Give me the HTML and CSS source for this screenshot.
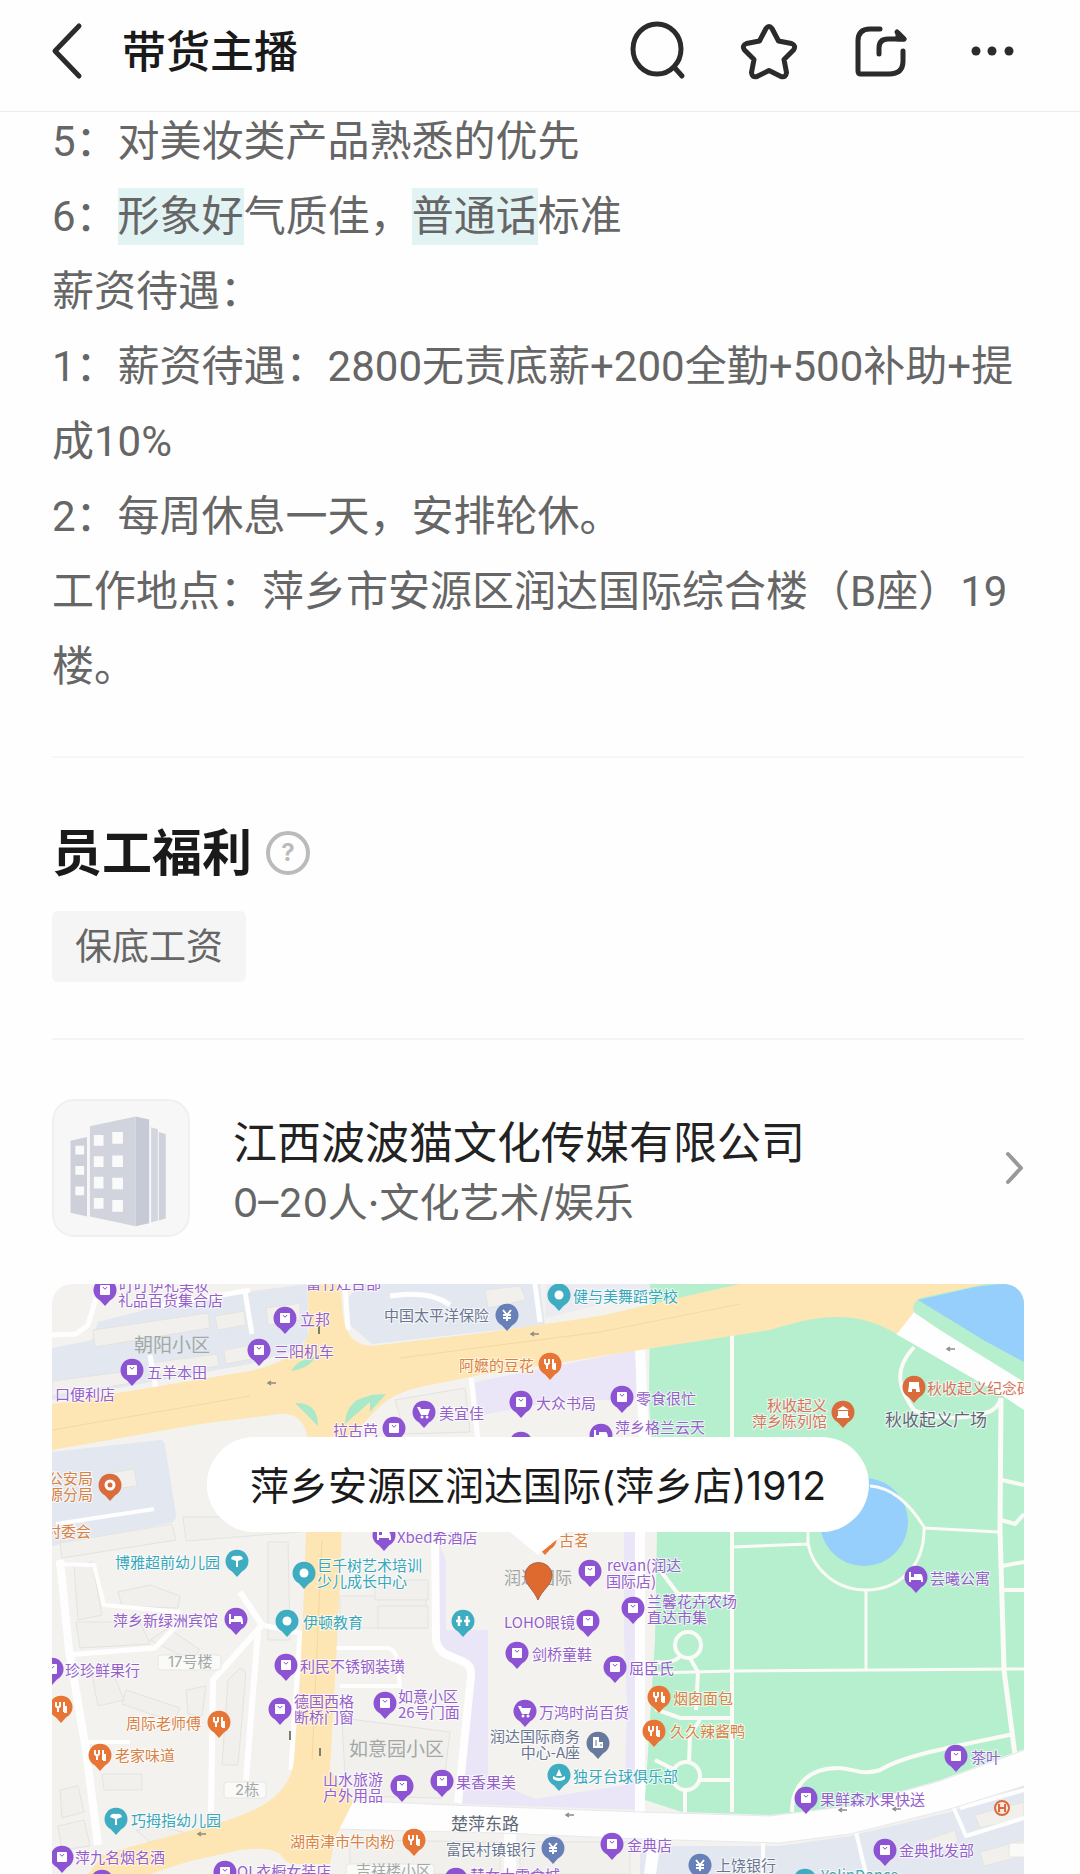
FILE: index.html
```html
<!DOCTYPE html>
<html lang="zh-CN">
<head>
    <meta charset="UTF-8" />
    <meta name="viewport" content="width=device-width, initial-scale=1" />
    <title>带货主播</title>

    <link rel="stylesheet" href="styles.css">
</head>
<body>
<header class="topbar">
    <button class="icon-btn back" type="button" aria-label="返回">
        <svg width="34" height="60" viewBox="0 0 34 60"><path d="M30 5 L6 30 L30 55" /></svg>
    </button>
    <h1>带货主播</h1>
    <div class="actions">
        <button class="icon-btn" type="button" aria-label="搜索">
            <svg width="60" height="60" viewBox="0 0 60 60"><ellipse cx="31" cy="28" rx="24" ry="25" /><path d="M48 46 L56 55" /></svg>
        </button>
        <button class="icon-btn" type="button" aria-label="收藏">
            <svg width="60" height="60" viewBox="0 0 60 60"><path d="M28 7.500 Q31 3.500 34 7.500 L40.500 20 L53.500 22.500 Q58.500 24.500 55.500 29 L46 38.500 L48.500 51.500 Q48 57 43 55.500 L31 49.500 L19 55.500 Q14 57 13.500 51.500 L16 38.500 L6.500 29 Q3.500 24.500 8.500 22.500 L21.500 20 Z" /></svg>
        </button>
        <button class="icon-btn" type="button" aria-label="分享">
            <svg width="60" height="60" viewBox="0 0 60 60"><path d="M30 8 H20 Q8 8 8 20 V50 Q8 53 11 53 H39 Q53 53 53 40 V30" /><path d="M29 33 V27 Q29 18 38 18 H54 L47 11" /><path d="M48 12 L54 18 H48 Z" /></svg>
        </button>
        <button class="icon-btn" type="button" aria-label="更多">
            <svg class="dots" width="60" height="60" viewBox="0 0 60 60"><circle cx="14" cy="30" r="4.500" /><circle cx="30" cy="30" r="4.500" /><circle cx="47" cy="30" r="4.500" /></svg>
        </button>
    </div>
</header>

<main class="page">
    <section class="detail">
        <p>5：对美妆类产品熟悉的优先</p>
        <p>6：<mark>形象好</mark>气质佳，<mark>普通话</mark>标准</p>
        <p>薪资待遇：</p>
        <p>1：薪资待遇：2800无责底薪+200全勤+500补助+提成10%</p>
        <p>2：每周休息一天，安排轮休。</p>
        <p>工作地点：萍乡市安源区润达国际综合楼（B座）19楼。</p>
    </section>

    <section class="welfare">
        <div class="welfare-head">
            <h2>员工福利</h2>
            <button class="help" type="button" aria-label="福利说明">?</button>
        </div>
        <ul class="tags">
            <li>保底工资</li>
        </ul>
    </section>

    <a class="company" href="#">
        <svg class="logo" viewBox="0 0 138 138">
            <path fill="#cdd0d8" d="M17 41 L34 37 V119 L17 115 Z" />
            <path fill="#d1d4dd" d="M37 26 L84 16 V129 L37 119 Z" />
            <path fill="#c5cad6" d="M84 16 L98 19 V126 L84 129 Z" />
            <path fill="#d3d6de" d="M100 27 L107 29 V123 L100 125 Z" />
            <path fill="#cdd1da" d="M108 32 L115 34 V121 L108 123 Z" />
            <path fill="#fafafa" d="M22 46h9v9h-9z M22 67h9v9h-9z M22 88h9v9h-9z M41 35h10v11h-10z M60 32h11v12h-11z M41 57h10v11h-10z M60 56h11v12h-11z M41 78h10v12h-10z M60 79h11v12h-11z M41 100h10v11h-10z M60 102h11v12h-11z" />
        </svg>
        <span class="company-text">
            <strong>江西波波猫文化传媒有限公司</strong>
            <span>0–20人·文化艺术/娱乐</span>
        </span>
        <svg class="chevron" width="20" height="36" viewBox="0 0 20 36"><path d="M4 4 L17 18 L4 32" /></svg>
    </a>

    <div class="map">
        <svg class="map-canvas" viewBox="52 1284 972 590" preserveAspectRatio="xMidYMin slice">
            <defs>
                <path id="pin" d="M0 16 L-5 10.500 A11.500 11.500 0 1 1 5 10.500 Z" />
                <g id="shop"><use href="#pin" fill="#8c54d2" /><rect x="-5" y="-5" width="10" height="10" rx="1" fill="#fff" /><path d="M-2 -3 Q0 1 2 -3" stroke="#8c54d2" fill="none" /></g>
                <g id="cart"><use href="#pin" fill="#8c54d2" /><path d="M-7 -5 H-4 L-3 -3 H6 L4 3 H-3 Z" fill="#fff" /><circle cx="-2" cy="5" r="1.500" fill="#fff" /><circle cx="3" cy="5" r="1.500" fill="#fff" /></g>
                <g id="bed"><use href="#pin" fill="#8c54d2" /><path d="M-7 -5 H-5 V0 H-2 V-3 H5 Q7 -2 7 5 H5 V3 H-5 V5 H-7 Z" fill="#fff" /></g>
                <g id="food"><use href="#pin" fill="#e67536" /><path d="M-5 -5 V-1 L-3 1 V5 M-1 -5 V-1 L-3 1 M3 -5 V5 M5 -1 V5 H3" stroke="#fff" stroke-width="2" fill="none" /></g>
                <g id="spot"><use href="#pin" fill="#3fadc1" /><circle r="4.500" fill="#fff" /></g>
                <g id="kids"><use href="#pin" fill="#3fadc1" /><path d="M-6 -2 Q-5 -6 0 -5 Q5 -6 6 -2 L1 0 V6 H-1 V0 Z" fill="#fff" /></g>
                <g id="people"><use href="#pin" fill="#3fadc1" /><path d="M-4 -5 V5 M4 -5 V5 M-7 0 H-1 M1 0 H7" stroke="#fff" stroke-width="2.500" /></g>
                <g id="club"><use href="#pin" fill="#3fadc1" /><path d="M0 -6 L3 1 H-3 Z M-6 1 Q0 5 6 1 V4 Q0 8 -6 4 Z" fill="#fff" /></g>
                <g id="bank"><use href="#pin" fill="#6780b8" /><path d="M-4 -5 L0 0 L4 -5 M0 0 V6 M-4 0 H4 M-4 3 H4" stroke="#fff" stroke-width="2" fill="none" /></g>
                <g id="office"><use href="#pin" fill="#667a9b" /><path d="M-5 -6 H1 V-1 H5 V5 H-5 Z" fill="#fff" /><path d="M-2 -3 V3 M2 2 H4" stroke="#667a9b" /></g>
                <g id="museum"><use href="#pin" fill="#d96b3c" /><path d="M0 -6 L6 -2 H-6 Z M-5 -1 H5 V4 H-5 Z M-6 4 H6 V6 H-6 Z" fill="#fff" /></g>
                <g id="memorial"><use href="#pin" fill="#d96b3c" /><path d="M-5 -5 H5 V-2 L6 5 H2 V2 H-2 V5 H-6 L-5 -2 Z" fill="#fff" /></g>
                <g id="arrow"><path d="M-4 0 H4 M-1 -2 L-4 0 L-1 2" stroke="#8f8c84" stroke-width="1.500" fill="none" /></g>
            </defs>

            <rect x="52" y="1284" width="972" height="590" fill="#f3f2ef" />

            <!-- housing blocks -->
            <g fill="#e3e8f0">
                <path d="M52 1348 L92 1340 L98 1322 L160 1306 L245 1292 L308 1284 V1336 L298 1350 L250 1364 L52 1400 Z" />
                <path d="M52 1452 L160 1440 Q164 1440 165 1445 L176 1515 Q176 1522 170 1523 L52 1546 Z" />
                <path d="M360 1284 H540 L545 1325 L372 1344 L350 1325 L346 1300 Z" />
                <path d="M640 1846 L780 1846 L850 1836 L950 1812 L1024 1786 V1874 H640 Z" />
                <path d="M546 1284 H660 V1290 L545 1318 Z" fill="#ecebf2" />
            </g>
            <g fill="#f1f0ed" stroke="#e4e3df">
                <path d="M93 1330 L208 1313 L210 1328 L95 1347 Z" />
                <path d="M215 1316 L244 1311 L246 1325 L218 1330 Z" />
                <path d="M266 1308 L300 1303 V1320 L268 1325 Z" />
                <path d="M150 1363 L217 1354 L219 1366 L152 1376 Z" />
                <path d="M224 1350 L262 1343 V1357 L226 1364 Z" />
                <path d="M52 1381 L130 1371 L132 1383 L52 1396 Z" />
                <path d="M104 1474 L134 1469 L137 1486 L106 1490 Z" />
                <path d="M60 1543 L172 1524 L176 1540 L62 1558 Z" />
                <path d="M183 1517 H300 V1532 L186 1541 Z" />
                <path d="M268 1542 H288 L290 1640 H268 Z" />
                <path d="M74 1566 L92 1562 L102 1615 L78 1620 Z" />
                <path d="M118 1592 L150 1585 L180 1596 L178 1608 L122 1606 Z" />
                <path d="M76 1622 H140 L150 1644 L80 1648 Z" />
                <path d="M150 1640 L168 1628 L200 1650 L190 1660 Z" />
                <path d="M126 1690 L180 1708 L174 1722 L122 1704 Z" />
                <path d="M92 1675 L112 1670 L124 1700 L98 1706 Z" />
                <path d="M186 1690 L206 1686 L202 1716 L188 1714 Z" />
                <path d="M228 1680 L240 1668 L246 1672 L238 1765 L222 1765 Z" />
                <path d="M102 1774 H142 V1790 H104 Z" />
                <path d="M60 1790 L78 1786 L84 1812 L62 1818 Z" />
                <path d="M58 1826 L84 1820 L90 1846 L62 1850 Z" />
                <path d="M136 1830 L160 1826 L190 1834 L150 1842 Z" />
                <path d="M340 1596 H426 V1628 H340 Z" />
                <path d="M342 1718 L450 1732 L442 1798 L346 1796 Z" />
                <path d="M375 1580 H428 V1600 H375 Z M378 1606 H428 V1628 H378 Z" />
                <path d="M395 1400 L465 1388 L470 1432 L405 1434 Z" />
                <path d="M485 1290 L520 1286 L526 1300 L488 1308 Z" />
                <path d="M350 1840 L500 1842 V1874 H350 Z" />
                <path d="M520 1842 H630 V1874 H520 Z" />
                <path d="M975 1815 L1024 1802 V1818 L980 1828 Z" />
                <path d="M920 1842 L955 1830 L958 1842 L925 1854 Z" />
                <path d="M980 1852 L1024 1840 V1856 L984 1866 Z" />
            </g>

            <!-- shopping area -->
            <g fill="#ebe6f7">
                <path d="M475 1382 L636 1350 V1400 L560 1400 L478 1416 Z" />
                <path d="M434 1532 L446 1560 V1630 H488 V1778 L535 1799 L625 1785 L627 1700 L624 1640 V1532 H640 V1810 L462 1804 L474 1665 L440 1650 Z" />
            </g>

            <!-- park and water -->
            <path fill="#b6efce" d="M650 1284 H1024 V1749 L940 1780 L850 1806 L770 1815 L682 1812 L645 1800 L655 1640 L657 1532 L649 1400 Z" />
            <path fill="#96cffb" d="M918 1300 L975 1287 L1000 1284 H1024 V1362 L985 1341 Z" />
            <circle cx="864" cy="1522" r="44" fill="#96cffb" />

            <!-- footpaths in the park -->
            <g fill="none" stroke="#fbfaf6" stroke-width="4">
                <path d="M732 1332 V1812" />
                <path d="M655 1673 L732 1671 L1024 1669" stroke-width="3" />
                <path d="M866 1590 V1671" stroke-width="3" />
                <path d="M870 1486 Q900 1488 924 1527 C925 1570 895 1590 866 1590 C835 1590 812 1568 808 1543 V1528 M808 1544 L732 1547 M924 1528 L998 1532" stroke-width="3" />
                <path d="M914 1347 C895 1368 896 1385 914 1410 Q945 1424 985 1413 Q998 1410 1001 1398" />
                <path d="M1001 1398 L1000 1530 L1004 1670 L1015 1755" stroke-width="5" />
                <path d="M1002 1480 L1024 1485 M1001 1520 L1015 1524 L1024 1514 M1002 1566 L1024 1562 M1002 1590 H1024" />
                <path d="M792 1812 C792 1784 810 1768 838 1768 C852 1768 862 1776 880 1770 C900 1758 925 1752 1014 1734" />
                <circle cx="688" cy="1645" r="13" />
                <circle cx="686" cy="1776" r="14" />
                <path d="M655 1662 Q675 1664 680 1656 M690 1658 L698 1672 L696 1710 M700 1720 L690 1735 L689 1762 M685 1790 V1812 M700 1780 H732 M655 1760 L675 1770" />
                <path d="M655 1709 L680 1718 H732 M660 1570 L678 1594 H732" />
            </g>
            <path fill="#fefefe" d="M912 1311 L940 1330 L1024 1382 V1410 L1000 1394 L910 1342 L896 1334 Z" />

            <!-- minor roads -->
            <g fill="none" stroke="#fefefe" stroke-width="8" stroke-linejoin="round">
                <path d="M640 1348 L644 1440 M640 1530 V1812" stroke-width="10" />
                <path d="M471 1378 L478 1440" stroke-width="5" />
                <path d="M435 1530 L436 1640 Q438 1652 450 1656 L464 1662 Q472 1666 471 1676 L458 1803" />
                <path d="M60 1560 L69 1650 L86 1750 L98 1845" />
                <path d="M66 1655 L155 1648 L180 1622" stroke-width="5" />
                <path d="M56 1564 L94 1565 L104 1605 L180 1612" stroke-width="4" />
                <path d="M240 1592 L262 1625 L213 1680 L211 1812" stroke-width="6" />
                <path d="M258 1630 L246 1780" stroke-width="6" />
                <path d="M262 1625 L300 1633 L291 1770" stroke-width="5" />
                <path d="M84 1742 L130 1742" stroke-width="4" />
                <path d="M52 1335 L76 1334 L88 1325 L96 1298 M245 1292 L252 1334 M150 1355 L156 1390 M160 1306 L250 1290 M345 1284 L348 1330" stroke-width="5" />
                <path d="M390 1296 Q430 1290 450 1305 M535 1284 L540 1322" stroke-width="5" />
                <path d="M56 1524 L154 1509" stroke-width="4" />
                <path d="M335 1648 H388 Q398 1650 398 1670 L400 1686 H340" stroke-width="4" />
                <path d="M763 1842 V1874 M856 1832 L866 1874 M952 1804 L966 1836 L1024 1818 M960 1808 L1024 1790" stroke-width="4" />
                <path d="M510 1830 V1874 M655 1838 L650 1874" stroke-width="12" />
            </g>
            <path fill="#fefefe" stroke="#e9e8ec" d="M340 1800 L450 1805 L640 1812 L770 1816 L850 1806 L940 1781 L1030 1748 V1784 L950 1809 L850 1834 L780 1843 L640 1839 L500 1833 L335 1829 Z" />

            <!-- main roads -->
            <path fill="#fde6b3" d="M52 1404 L250 1371 Q306 1358 309 1330 L308 1284 H340 L343 1315 Q346 1345 372 1346 L490 1332 L600 1316 L700 1293 L740 1284 H985 L920 1298 Q911 1304 914 1312 L897 1334 C860 1312 825 1312 770 1330 L640 1350 L480 1375 L420 1387 Q395 1392 378 1408 L343 1445 L341 1560 L335 1680 L330 1770 L353 1802 L335 1838 L330 1864 H292 Q285 1862 280 1854 Q270 1846 240 1850 L190 1861 L150 1874 H88 L104 1854 L200 1828 C250 1815 290 1800 294 1760 L300 1680 L305 1570 L308 1440 Q304 1412 280 1414 L200 1424 L52 1450 Z" />
            <g fill="none" stroke="#f3d9a0">
                <path d="M52 1430 L250 1396 M400 1358 L600 1332 L740 1304 M322 1540 L312 1760" />
            </g>
            <g fill="#a9e9c9">
                <path d="M291 1371 Q298 1359 315 1357 Q310 1368 291 1371 Z" />
                <path d="M295 1403 Q318 1402 318 1426 Z" />
                <path d="M345 1424 Q346 1396 378 1395 Z" />
                <path d="M370 1395 L386 1394 L370 1412 Z" />
            </g>

            <use href="#arrow" x="272" y="1383" /><use href="#arrow" x="535" y="1334" />
            <use href="#arrow" x="570" y="1815" /><use href="#arrow" x="202" y="1834" />
            <use href="#arrow" x="843" y="1810" /><use href="#arrow" x="897" y="1809" /><use href="#arrow" x="951" y="1349" />
            <path d="M320 1748 V1756 M290 1731 V1740 M319 1326 V1334" stroke="#77806f" stroke-width="2" />

            <g fill="#fafaf9" stroke="#e6e6e3">
                <rect x="158" y="1655" width="63" height="15" rx="3" />
                <rect x="224" y="1782" width="42" height="16" rx="3" />
                <rect x="346" y="1864" width="88" height="16" rx="3" />
                <rect x="1009" y="1843" width="30" height="14" rx="3" />
            </g>

            <!-- area names -->
            <g class="area">
                <text x="134" y="1352">朝阳小区</text>
                <text x="349" y="1756">如意园小区</text>
            </g>
            <g class="block">
                <text x="168" y="1667">17号楼</text>
                <text x="235" y="1795">2栋</text>
                <text x="356" y="1876">吉祥楼小区</text>
                <text class="big" x="504" y="1584">润达国际</text>
            </g>
            <g class="road">
                <text x="451" y="1830">楚萍东路</text>
                <text x="885" y="1426">秋收起义广场</text>
            </g>

            <!-- shops and hotels -->
            <g class="label purple">
                <use href="#shop" x="105" y="1290" /><text x="119" y="1291">叮叮伊礼美妆</text><text x="118" y="1306">礼品百货集合店</text>
                <text x="306" y="1289">富竹灶台部</text>
                <use href="#shop" x="285" y="1318" /><text x="300" y="1325">立邦</text>
                <use href="#shop" x="259" y="1350" /><text x="274" y="1357">三阳机车</text>
                <use href="#shop" x="132" y="1370" /><text x="147" y="1378">五羊本田</text>
                <text x="55" y="1400">口便利店</text>
                <use href="#shop" x="394" y="1428" /><text x="333" y="1436">拉古芭</text>
                <use href="#cart" x="424" y="1412" /><text x="439" y="1419">美宜佳</text>
                <use href="#shop" x="521" y="1402" /><text x="536" y="1409">大众书局</text>
                <use href="#shop" x="622" y="1397" /><text x="636" y="1404">零食很忙</text>
                <use href="#bed" x="601" y="1435" /><text x="615" y="1433">萍乡格兰云天</text>
                <use href="#shop" x="521" y="1443" />
                <use href="#bed" x="384" y="1535" /><text x="397" y="1543">Xbed希酒店</text>
                <use href="#shop" x="590" y="1571" /><text x="607" y="1571">revan(润达</text><text x="606" y="1587">国际店)</text>
                <use href="#shop" x="633" y="1608" /><text x="647" y="1607">兰馨花卉农场</text><text x="647" y="1623">直达市集</text>
                <use href="#bed" x="916" y="1577" /><text x="930" y="1584">芸曦公寓</text>
                <use href="#bed" x="236" y="1619" /><text class="end" x="218" y="1626">萍乡新绿洲宾馆</text>
                <use href="#shop" x="286" y="1665" /><text x="300" y="1672">利民不锈钢装璜</text>
                <use href="#shop" x="52" y="1669" /><text x="65" y="1676">珍珍鲜果行</text>
                <use href="#shop" x="280" y="1709" /><text x="294" y="1707">德国西格</text><text x="294" y="1723">断桥门窗</text>
                <use href="#shop" x="588" y="1621" /><text class="end" x="575" y="1628">LOHO眼镜</text>
                <use href="#shop" x="517" y="1653" /><text x="532" y="1660">剑桥童鞋</text>
                <use href="#shop" x="615" y="1667" /><text x="629" y="1674">屈臣氏</text>
                <use href="#shop" x="385" y="1703" /><text x="398" y="1702">如意小区</text><text x="398" y="1718">26号门面</text>
                <use href="#cart" x="525" y="1711" /><text x="539" y="1718">万鸿时尚百货</text>
                <use href="#shop" x="402" y="1786" /><text x="323" y="1785">山水旅游</text><text x="323" y="1801">户外用品</text>
                <use href="#shop" x="442" y="1781" /><text x="456" y="1788">果香果美</text>
                <use href="#shop" x="612" y="1844" /><text x="627" y="1851">金典店</text>
                <use href="#shop" x="62" y="1857" /><text x="75" y="1863">萍九名烟名酒</text>
                <use href="#shop" x="225" y="1872" /><text x="237" y="1877">QL衣橱女装店</text>
                <use href="#shop" x="102" y="1881" />
                <use href="#shop" x="456" y="1879" /><text x="470" y="1881">慧女士零食城</text>
                <use href="#shop" x="956" y="1756" /><text x="971" y="1763">茶叶</text>
                <use href="#shop" x="806" y="1798" /><text x="820" y="1805">果鲜森水果快送</text>
                <use href="#shop" x="885" y="1850" /><text x="899" y="1856">金典批发部</text>
            </g>

            <!-- food -->
            <g class="label orange">
                <use href="#food" x="550" y="1364" /><text class="end" x="534" y="1371">阿嬷的豆花</text>
                <use href="#food" x="545" y="1539" /><text x="559" y="1546">古茗</text>
                <use href="#food" x="659" y="1697" /><text x="673" y="1704">烟囱面包</text>
                <use href="#food" x="654" y="1731" /><text x="670" y="1737">久久辣酱鸭</text>
                <use href="#food" x="61" y="1707" />
                <use href="#food" x="219" y="1722" /><text class="end" x="201" y="1729">周际老师傅</text>
                <use href="#food" x="100" y="1755" /><text x="115" y="1761">老家味道</text>
                <use href="#food" x="414" y="1840" /><text class="end" x="395" y="1847">湖南津市牛肉粉</text>
                <use href="#pin" x="110" y="1485" fill="#d96b3c" /><circle cx="110" cy="1485" r="4" fill="none" stroke="#fff" stroke-width="3" />
                <text class="end" x="93" y="1484">公安局</text><text class="end" x="93" y="1500">源分局</text>
                <text class="end" x="91" y="1537">村委会</text>
            </g>

            <!-- sights -->
            <g class="label red">
                <use href="#museum" x="843" y="1412" /><text class="end" x="827" y="1411">秋收起义</text><text class="end" x="827" y="1427">萍乡陈列馆</text>
                <use href="#memorial" x="914" y="1387" /><text x="927" y="1394">秋收起义纪念碑</text>
                <circle cx="1002" cy="1808" r="7" fill="#fbe9e0" stroke="#d96b3c" stroke-width="2" /><path d="M999 1804 V1812 M1005 1804 V1812 M999 1808 H1005" stroke="#d96b3c" stroke-width="2" />
            </g>

            <!-- schools and leisure -->
            <g class="label teal">
                <use href="#spot" x="559" y="1295" /><text x="573" y="1302">健与美舞蹈学校</text>
                <use href="#kids" x="237" y="1561" /><text class="end" x="220" y="1568">博雅超前幼儿园</text>
                <use href="#spot" x="304" y="1573" /><text x="317" y="1571">巨千树艺术培训</text><text x="317" y="1587">少儿成长中心</text>
                <use href="#spot" x="287" y="1621" /><text x="303" y="1628">伊顿教育</text>
                <use href="#people" x="463" y="1621" />
                <use href="#club" x="559" y="1775" /><text x="573" y="1782">独牙台球俱乐部</text>
                <use href="#kids" x="116" y="1819" /><text x="131" y="1826">巧拇指幼儿园</text>
                <use href="#spot" x="805" y="1880" /><text x="821" y="1881">YolinDance</text>
            </g>

            <!-- banks and offices -->
            <g class="label slate">
                <use href="#bank" x="507" y="1315" /><text class="end" x="489" y="1321">中国太平洋保险</text>
                <use href="#office" x="598" y="1743" /><text class="end" x="580" y="1742">润达国际商务</text><text class="end" x="580" y="1758">中心-A座</text>
                <use href="#bank" x="553" y="1848" /><text class="end" x="536" y="1855">富民村镇银行</text>
                <use href="#bank" x="700" y="1865" /><text x="716" y="1871">上饶银行</text>
            </g>

            <path fill="#df6a30" stroke="#a9614a" d="M538 1600 C534 1590 525 1585 525 1575 A13 12 0 0 1 552 1575 C552 1585 542 1590 538 1600 Z" />
        </svg>
        <div class="bubble">萍乡安源区润达国际(萍乡店)1912</div>
    </div>
</main>
</body>
</html>
```
FILE: styles.css
```css
* {
    box-sizing: border-box;
}

body {
    margin: 0;
    background: #fefefe;
    color: #222;
    font-family: Inter, "Noto Sans CJK SC", sans-serif;
}

h1, h2, p, ul {
    margin: 0;
    padding: 0;
}

/* top bar */
.topbar {
    display: flex;
    align-items: center;
    height: 112px;
    padding: 0 58px 10px 49px;
    border-bottom: 1px solid #ececec;
}

.topbar h1 {
    margin: 2px 0 0 39px;
    color: #1a1a1a;
    font-size: 44px;
    font-weight: 500;
    line-height: 60px;
}

.actions {
    display: flex;
    gap: 52px;
    margin-left: auto;
}

.icon-btn {
    padding: 0;
    border: 0;
    background: none;
}

.icon-btn svg {
    display: block;
    fill: none;
    stroke: #2b2b2b;
    stroke-width: 5;
    stroke-linecap: round;
    stroke-linejoin: round;
}

.icon-btn .dots {
    fill: #2b2b2b;
    stroke: none;
}

.page {
    padding: 0 56px 0 52px;
}

/* job description */
.detail {
    margin-top: -8px;
    padding-bottom: 52px;
    border-bottom: 2px solid #f6f6f6;
    color: #666;
    font-family: Roboto, "Noto Sans CJK SC", sans-serif;
    font-size: 42px;
    line-height: 75px;
}

mark {
    padding: 4px 0;
    background: #e2f3f4;
    color: inherit;
}

/* welfare */
.welfare {
    padding: 65px 0 56px;
    border-bottom: 2px solid #f4f4f4;
}

.welfare-head {
    display: flex;
    align-items: center;
    gap: 14px;
}

.welfare h2 {
    color: #1a1a1a;
    font-size: 50px;
    font-weight: 700;
    line-height: 60px;
}

.help {
    width: 44px;
    height: 44px;
    padding: 0;
    border: 4px solid #bbb;
    border-radius: 50%;
    background: none;
    color: #bbb;
    font: bold 24px/36px Inter, sans-serif;
}

.tags {
    display: flex;
    gap: 16px;
    margin-top: 28px;
    list-style: none;
}

.tags li {
    padding: 0 23px;
    border-radius: 6px;
    background: #f5f5f5;
    color: #666;
    font-size: 37px;
    line-height: 71px;
}

/* company */
.company {
    display: flex;
    align-items: center;
    margin: 59px 0 47px;
    color: inherit;
    text-decoration: none;
}

.logo {
    flex: none;
    width: 138px;
    height: 138px;
    border: 2px solid #f0f0f0;
    border-radius: 22px;
    background: #f7f7f7;
}

.company-text {
    flex: 1;
    display: flex;
    flex-direction: column;
    margin-left: 43px;
    padding-top: 9px;
    color: #666;
    font-size: 40px;
    line-height: 60px;
}

.company-text strong {
    color: #222;
    font-size: 44px;
    font-weight: 400;
}

.chevron {
    flex: none;
    fill: none;
    stroke: #999;
    stroke-width: 4;
    stroke-linecap: round;
    stroke-linejoin: round;
}

/* map */
.map {
    position: relative;
    height: 590px;
    overflow: hidden;
    border-radius: 20px 20px 0 0;
}

.map-canvas {
    display: block;
    width: 100%;
    height: 100%;
}

.label {
    font-size: 15px;
    font-family: "Noto Sans CJK SC", sans-serif;
}

.label text, .road text {
    stroke: #fff;
    stroke-width: 2px;
    stroke-opacity: 0.7;
    paint-order: stroke;
}

.label .end {
    text-anchor: end;
}

.purple { fill: #9560cc; }
.orange { fill: #d98243; }
.red { fill: #d8745c; }
.teal { fill: #35a8bb; }
.slate { fill: #6a7690; }

.area {
    fill: #a3a8a6;
    font-size: 19px;
}

.block {
    fill: #a3a8a6;
    font-size: 15px;
}

.block .big {
    font-size: 17px;
}

.road {
    fill: #5f6875;
    font-size: 17px;
}

.bubble {
    position: absolute;
    top: 153px;
    left: 50%;
    transform: translateX(-50%);
    padding: 2px 43px 0;
    border-radius: 48px;
    background: #fff;
    color: #1a1a1a;
    font-size: 39px;
    line-height: 93px;
    white-space: nowrap;
}

.bubble::after {
    content: "";
    position: absolute;
    top: 100%;
    left: 50%;
    margin-left: -28px;
    border: 28px solid transparent;
    border-top: 23px solid #fff;
    border-bottom: 0;
}
```
